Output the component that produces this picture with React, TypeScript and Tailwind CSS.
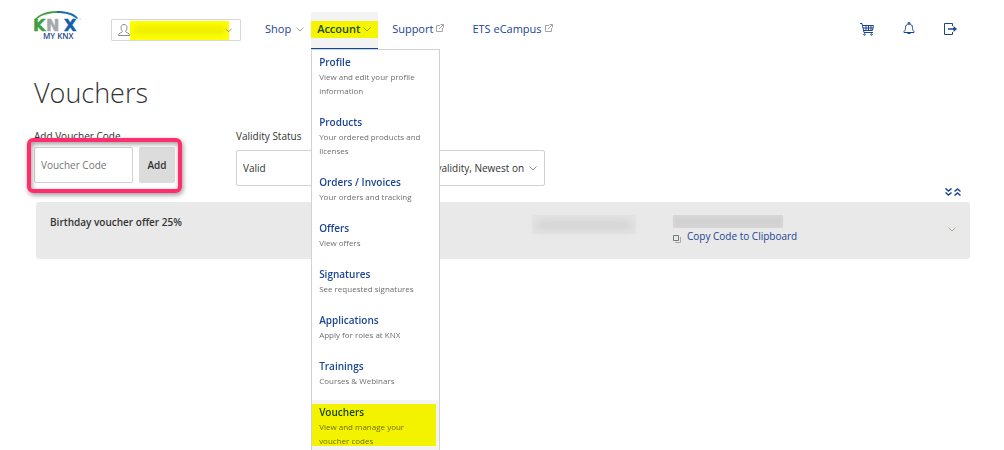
import { useState } from "react";
import type { ReactNode } from "react";

type MenuItem = {
  title: string;
  description: string;
  active?: boolean;
};

const accountMenu: MenuItem[] = [
  { title: "Profile", description: "View and edit your profile information" },
  { title: "Products", description: "Your ordered products and licenses" },
  { title: "Orders / Invoices", description: "Your orders and tracking" },
  { title: "Offers", description: "View offers" },
  { title: "Signatures", description: "See requested signatures" },
  { title: "Applications", description: "Apply for roles at KNX" },
  { title: "Trainings", description: "Courses & Webinars" },
  { title: "Vouchers", description: "View and manage your voucher codes", active: true },
];

function Chevron({ className = "" }: { className?: string }) {
  return (
    <svg viewBox="0 0 8 5" className={`h-[5px] w-2 shrink-0 fill-none ${className}`} aria-hidden="true">
      <path d="M0.5 0.5 4 4 7.5 0.5" stroke="currentColor" />
    </svg>
  );
}

function ExternalIcon() {
  return (
    <svg viewBox="0 0 8 8" className="mb-[2px] h-2 w-2 fill-none stroke-[#a3a3a3]" aria-hidden="true">
      <path d="M4 1.5H.5v6h6V4M3 5l4.500-4.500M4.500 0.500h3v3" />
    </svg>
  );
}

function Logo() {
  return (
    <a href="#home" aria-label="MY KNX" className="block shrink-0">
      <svg viewBox="0 0 48 32" className="h-8 w-12">
        <path d="M0 9C5 3 13 0 23 0v2C14 2 7 4 2 9z" fill="#3f9f3c" />
        <path d="M23 0c10 0 17 2 21 7l-1 1C38 4 32 2 23 2z" fill="#1d6db3" />
        <g fontFamily="DejaVu Sans, sans-serif" fontWeight="700" fontSize="16" strokeWidth="0.5">
          <text x="-1" y="20" fill="#3f9f3c" stroke="#3f9f3c">K</text>
          <text x="12" y="20" fill="#a5a8ab" stroke="#a5a8ab">N</text>
          <text x="30" y="20" fill="#1260ab" stroke="#1260ab">X</text>
        </g>
        <circle cx="46" cy="8" r="0.7" fill="#9cc3e3" />
        <text
          x="9"
          y="28"
          fill="#1b4592"
          fontFamily="Open Sans, sans-serif"
          fontWeight="600"
          fontSize="8"
        >
          MY KNX
        </text>
      </svg>
    </a>
  );
}

function CartIcon() {
  return (
    <svg viewBox="0 0 14 14" className="h-[14px] w-[14px] fill-none stroke-current" aria-hidden="true">
      <path d="M0 1.5h2l2 9h9M2.5 3.5h11l-1 5H4M3 6h10M6 3.5v5M8.5 3.5v5M11 3.5v5" />
      <circle cx="4.5" cy="12.5" r="0.8" />
      <circle cx="11.5" cy="12.5" r="0.8" />
    </svg>
  );
}

function BellIcon() {
  return (
    <svg viewBox="0 0 12 14" className="h-[14px] w-3 fill-none stroke-current" aria-hidden="true">
      <circle cx="6" cy="1.2" r="1" />
      <path d="M1 9.500c1.300-1.200 1.500-2.300 1.500-4C2.500 3.300 4 2 6 2s3.500 1.300 3.500 3.500c0 1.700.2 2.800 1.500 4v1H1z" />
      <path d="M4.500 11.500h3" />
    </svg>
  );
}

function LogoutIcon() {
  return (
    <svg viewBox="0 0 14 14" className="h-[14px] w-[14px] fill-none stroke-current" aria-hidden="true">
      <path d="M8.500 4V1.500h-8v11h8V10" />
      <path d="M4 7h7" strokeWidth="1.500" />
      <path d="M9.500 4 13 7l-3.500 3z" fill="currentColor" stroke="none" />
    </svg>
  );
}

function NavLink({ children, href }: { children: ReactNode; href: string }) {
  return (
    <a href={href} className="flex items-center gap-[3px]">
      {children}
      <ExternalIcon />
    </a>
  );
}

function AccountMenu({ items }: { items: MenuItem[] }) {
  return (
    <div className="absolute left-0 top-full z-10 w-[129px] border border-[#d2d2d2] bg-white">
      {items.map((item) => (
        <a
          key={item.title}
          href={`#${item.title}`}
          className={`relative block pt-[5px] pr-2 pb-3 pl-[7px] ${item.active ? "bg-[#f3f3f3]" : ""}`}
        >
          <span className="block text-[10px] leading-[15px] font-semibold text-[#1b4592]">{item.title}</span>
          <span className="block text-[8px] leading-[14px] text-[#6e6e6e]">{item.description}</span>
          {item.active && (
            <span className="absolute top-1 right-[3px] bottom-[14px] left-0 bg-[#ffff00] mix-blend-multiply" />
          )}
        </a>
      ))}
    </div>
  );
}

function Header() {
  const [open, setOpen] = useState(true);

  return (
    <header className="flex h-[49px] items-start">
      <div className="pt-[11px]">
        <Logo />
      </div>

      <button
        type="button"
        aria-label="Switch account"
        className="mt-[19px] ml-[29px] flex h-[22px] w-[130px] items-center rounded-[1px] border border-[#d8d8d8] pl-[6px] text-[#8c8c8c]"
      >
        <svg viewBox="0 0 12 12" className="h-3 w-3 fill-none stroke-current" aria-hidden="true">
          <path d="M4.500 7.500C3.500 6.500 3 5 3 3.500 3 1.800 4 .5 6 .5s3 1.300 3 3C9 5 8.500 6.500 7.500 7.500c0 1.200 4 1 4 4H.5c0-3 4-2.800 4-4z" />
        </svg>
        <span className="flex h-[19px] w-[99px] items-center bg-[#ffff00] px-1">
          <span className="h-2 w-full bg-[#d6d600]/50 blur-[3px]" />
        </span>
        <Chevron className="-ml-1 w-[7px]" />
      </button>

      <nav className="ml-6 flex items-start text-[11px] leading-4 text-[#1b4592]">
        <a href="#shop" className="mt-[21px] flex items-center gap-[5px] font-medium">
          Shop <Chevron className="text-[#a3a3a3]" />
        </a>
        <div className="relative ml-[7px]">
          <button
            type="button"
            aria-expanded={open}
            onClick={() => setOpen(!open)}
            className="mt-3 flex h-[37px] w-[67px] items-center rounded-t-[2px] border-b border-[#0a4b9f] bg-[#f3f3f3] font-semibold"
          >
            <span className="mb-[2px] flex h-[17px] w-full items-center justify-between bg-[#f5f500] pr-[7px] pl-[6px] text-[#1c4a1f]">
              Account <Chevron className="text-[#a3a31a]" />
            </span>
          </button>
          {open && <AccountMenu items={accountMenu} />}
        </div>
        <div className="mt-[21px] ml-[14px] flex gap-7 font-medium">
          <NavLink href="#support">Support</NavLink>
          <NavLink href="#ecampus">ETS eCampus</NavLink>
        </div>
      </nav>

      <div className="mt-[22px] mr-3 ml-auto flex gap-[29px] text-[#1b4592]">
        <button type="button" aria-label="Cart"><CartIcon /></button>
        <button type="button" aria-label="Notifications"><BellIcon /></button>
        <button type="button" aria-label="Log out"><LogoutIcon /></button>
      </div>
    </header>
  );
}

function Filters() {
  return (
    <div className="flex items-start text-[10px] text-[#333]">
      <div className="w-[202px]">
        <label htmlFor="code" className="block leading-[14px]">Add Voucher Code</label>
        <div className="relative mt-1 flex w-[141px] gap-[6px]">
          <input
            id="code"
            placeholder="Voucher Code"
            className="h-9 w-[99px] rounded-[2px] border border-[#d2d2d2] px-[6px] placeholder:text-[#757575]"
          />
          <button type="button" className="h-9 w-9 rounded-[2px] bg-[#dcdcdc] font-semibold">Add</button>
          <span className="pointer-events-none absolute -inset-x-[7px] -top-[9px] -bottom-[10px] rounded-[6px] border-4 border-[#ff2d6b] shadow-[1px_2px_5px_rgba(0,0,0,0.4),inset_1px_2px_5px_rgba(0,0,0,0.4)]" />
        </div>
      </div>
      <div>
        <label htmlFor="status" className="block leading-[14px]">Validity Status</label>
        <select
          id="status"
          className="mt-[7px] h-9 w-[144px] appearance-none rounded-[2px] border border-[#d2d2d2] bg-white px-[6px]"
        >
          <option>Valid</option>
        </select>
      </div>
      <div className="relative mt-[21px] ml-2">
        <select
          aria-label="Sort order"
          className="h-9 w-[157px] appearance-none rounded-[2px] border border-[#d2d2d2] bg-white pr-[19px] pl-3"
        >
          <option>Sort by validity, Newest on top</option>
        </select>
        <Chevron className="pointer-events-none absolute top-4 right-2 text-[#8c8c8c]" />
      </div>
    </div>
  );
}

function DoubleChevron({ up = false }: { up?: boolean }) {
  return (
    <svg viewBox="0 0 7 8" className={`h-2 w-[7px] fill-none stroke-[#1b4592] ${up ? "rotate-180" : ""}`} aria-hidden="true">
      <path d="M0.500 0.500 3.500 3l3-2.500M0.500 4.500l3 2.500 3-2.500" strokeWidth="1.500" />
    </svg>
  );
}

function VoucherRow() {
  return (
    <article className="ml-[2px] grid h-[57px] grid-cols-[482fr_141fr_275fr_auto] rounded-[3px] bg-[#e9e9e9] pt-[13px] pr-[14px] pl-[14px]">
      <h2 className="text-[10px] leading-[15px] font-semibold text-[#333]">Birthday voucher offer 25%</h2>
      <div className="flex h-[19px] w-[104px] items-center bg-[#e4e4e4] px-1">
        <span className="h-2 w-full bg-[#d0d0d0] blur-[4px]" />
      </div>
      <div>
        <div className="flex h-[13px] w-[110px] items-center overflow-hidden bg-[#d9d9d9]">
          <span className="h-[6px] w-full bg-[#cdcdcd] blur-[3px]" />
        </div>
        <button type="button" className="mt-px flex items-center gap-[6px] text-[10px] leading-[15px] text-[#1b4592]">
          <svg viewBox="0 0 8 8" className="mt-1 h-2 w-2 fill-none stroke-[#777]" aria-hidden="true">
            <path d="M0.500 0.500h5v5h-5z" />
            <path d="M7.500 2v5.500H2" stroke="#aaa" />
          </svg>
          Copy Code to Clipboard
        </button>
      </div>
      <button type="button" aria-label="Show details" className="mt-3 self-start text-[#b0a490]">
        <Chevron />
      </button>
    </article>
  );
}

export default function App() {
  return (
    <div className="min-h-screen overflow-hidden bg-white px-[34px] font-['Open_Sans',sans-serif]">
      <Header />
      <main>
        <h1 className="mt-6 mb-4 text-[27px] leading-10 font-light text-[#333]">Vouchers</h1>
        <Filters />
        <div className="flex h-4 items-center justify-end gap-[2px] pr-[9px] pb-1">
          <button type="button" aria-label="Expand all"><DoubleChevron /></button>
          <button type="button" aria-label="Collapse all"><DoubleChevron up /></button>
        </div>
        <VoucherRow />
      </main>
    </div>
  );
}
